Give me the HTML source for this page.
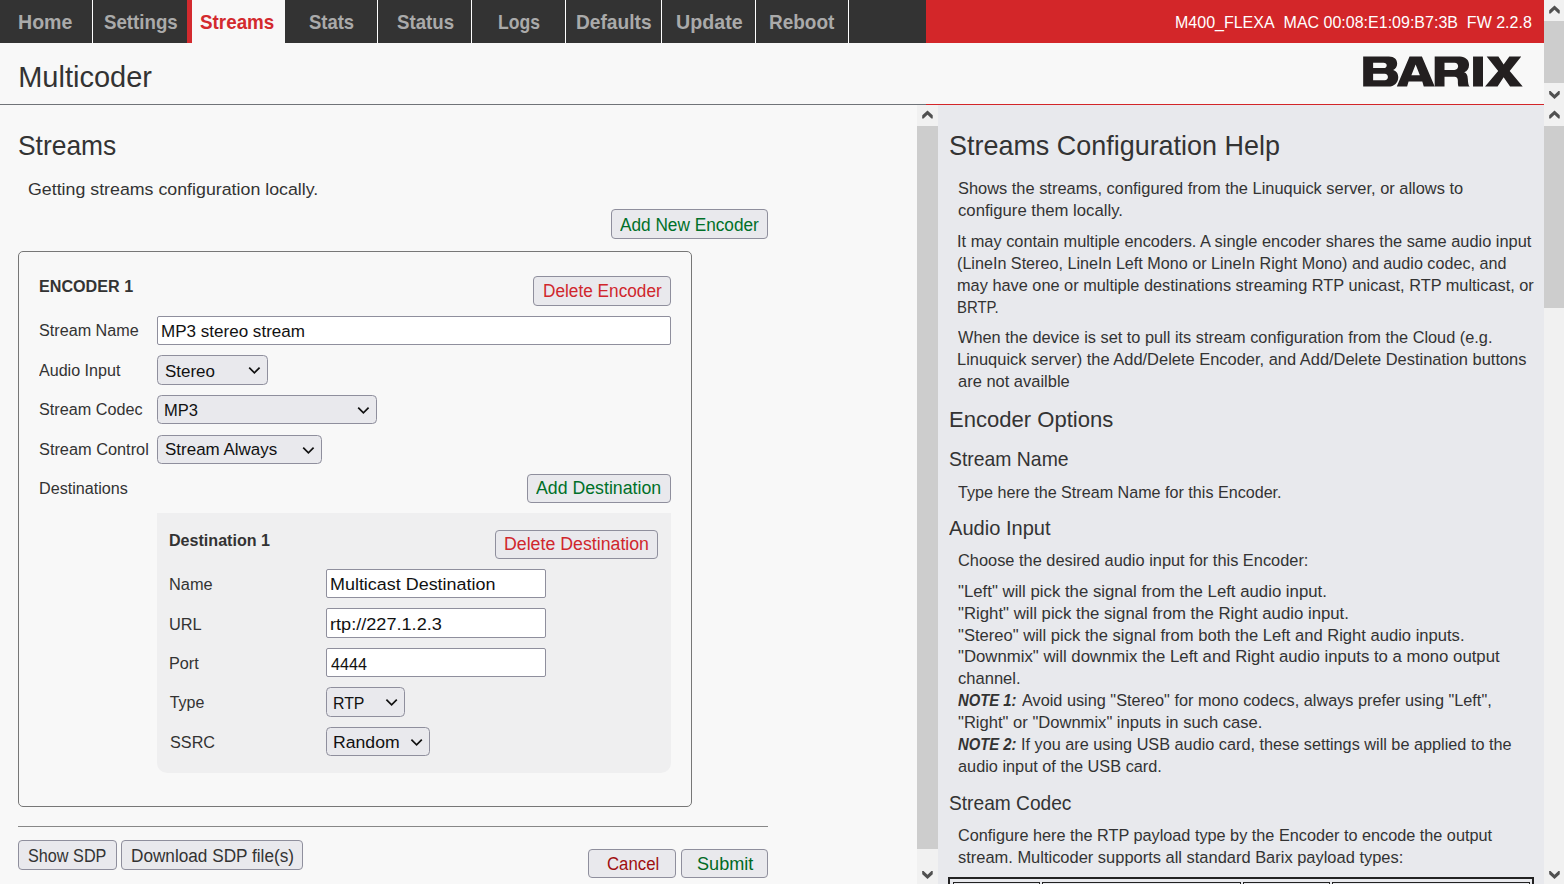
<!DOCTYPE html>
<html><head><meta charset="utf-8">
<style>
html,body{margin:0;padding:0;}
body{width:1564px;height:884px;overflow:hidden;position:relative;background:#f8f8f8;font-family:"Liberation Sans",sans-serif;}
.a{position:absolute;box-sizing:border-box;}
.t{position:absolute;white-space:pre;line-height:1;transform-origin:0 0;font-family:"Liberation Sans",sans-serif;}
.btn{position:absolute;box-sizing:border-box;background:#e9e9ed;border:1px solid #8f8f9d;border-radius:4px;}
.inp{position:absolute;box-sizing:border-box;background:#fff;border:1px solid #8f8f9d;border-radius:2px;}
.sel{position:absolute;box-sizing:border-box;background:#e9e9ed;border:1px solid #8f8f9d;border-radius:4.5px;}
.sep{position:absolute;top:0;width:1px;height:43px;background:#fff;}
.sb{position:absolute;background:#f1f1f1;width:20px;}
.th{position:absolute;left:0;width:20px;background:#cdcdcd;}
.mk{display:inline-block;width:0;height:0;vertical-align:baseline;}
</style></head><body>
<!-- nav -->
<div class="a" style="left:0;top:0;width:926px;height:43px;background:#333;"></div>
<div class="sep" style="left:92px"></div>
<div class="a" style="left:187px;top:0;width:5px;height:43px;background:#d32a2e;"></div>
<div class="a" style="left:192px;top:0;width:93px;height:43px;background:#f8f8f8;"></div>
<div class="sep" style="left:377px"></div>
<div class="sep" style="left:471px"></div>
<div class="sep" style="left:565px"></div>
<div class="sep" style="left:661px"></div>
<div class="sep" style="left:755px"></div>
<div class="sep" style="left:848px"></div>
<div class="a" style="left:926px;top:0;width:618px;height:43px;background:#d32629;"></div>
<!-- header line -->
<div class="a" style="left:0;top:104px;width:926px;height:1px;background:#707378;"></div>
<div class="a" style="left:926px;top:104px;width:618px;height:1px;background:#d32629;"></div>
<!-- logo -->
<svg class="a" style="left:1350px;top:45px;width:190px;height:55px" viewBox="0 0 1564 453">
<g fill="#231f20" fill-rule="evenodd">
<path d="M108,95 H320 C365,95 388,120 388,155 C388,180 375,198 355,205 C380,212 397,235 397,265 C397,310 365,342 315,342 H108 Z M190,147 H275 C292,147 302,156 302,168 C302,180 292,190 275,190 H190 Z M190,237 H285 C302,237 312,250 312,263 C312,278 302,290 285,290 H190 Z"/>
<path d="M385,342 L490,95 H592 L697,342 H607 L595,300 H482 L470,342 Z M505,250 L540,160 L575,250 Z"/>
<path d="M697,95 H905 C950,95 980,125 980,162 C980,195 965,215 940,225 C960,232 968,248 970,280 C972,315 975,332 985,342 H893 C888,330 888,315 888,295 C888,272 878,262 860,262 H778 V342 H697 Z M778,147 H860 C880,147 890,160 890,176 C890,192 880,205 860,205 H778 Z"/>
<path d="M1013,95 H1095 V342 H1013 Z"/>
<path d="M1125,95 H1222 L1265,160 L1312,95 H1410 L1315,215 L1422,342 H1318 L1265,265 L1215,342 H1112 L1220,215 Z"/>
</g></svg>
<!-- help panel bg -->
<div class="a" style="left:938px;top:105px;width:606px;height:779px;background:#e8e9ed;"></div>
<!-- scrollbars -->
<div class="sb" style="left:1544px;top:0;height:105px;">
  <svg class="a" style="left:0;top:0" width="20" height="21"><polygon points="5.12,13.58 6.54,13.58 10.50,9.63 14.46,13.58 15.72,13.58 15.72,10.26 10.50,5.51 5.28,10.26" fill="#505050"/></svg>
  <div class="th" style="top:21px;height:62px;"></div>
  <svg class="a" style="left:0;top:83px" width="20" height="30"><polygon points="5.12,7.92 6.54,7.92 10.50,11.87 14.46,7.92 15.72,7.92 15.72,11.24 10.50,15.99 5.28,11.24" fill="#505050"/></svg>
</div>
<div class="sb" style="left:1544px;top:105px;height:779px;">
  <svg class="a" style="left:0;top:0" width="20" height="21"><polygon points="5.12,13.58 6.54,13.58 10.50,9.63 14.46,13.58 15.72,13.58 15.72,10.26 10.50,5.51 5.28,10.26" fill="#505050"/></svg>
  <div class="th" style="top:21px;height:182px;"></div>
  <svg class="a" style="left:0;top:755px" width="20" height="30"><polygon points="5.12,10.92 6.54,10.92 10.50,14.87 14.46,10.92 15.72,10.92 15.72,14.24 10.50,18.99 5.28,14.24" fill="#505050"/></svg>
</div>
<div class="sb" style="left:917px;top:105px;height:779px;width:21px;">
  <svg class="a" style="left:0;top:0" width="21" height="21"><polygon points="5.12,13.58 6.54,13.58 10.50,9.63 14.46,13.58 15.72,13.58 15.72,10.26 10.50,5.51 5.28,10.26" fill="#505050"/></svg>
  <div class="th" style="top:21px;height:723px;width:21px;"></div>
  <svg class="a" style="left:0;top:755px" width="21" height="30"><polygon points="5.12,10.92 6.54,10.92 10.50,14.87 14.46,10.92 15.72,10.92 15.72,14.24 10.50,18.99 5.28,14.24" fill="#505050"/></svg>
</div>
<!-- left panel content -->
<div class="btn" style="left:611px;top:209px;width:157px;height:30px;"></div>
<div class="a" style="left:18px;top:251px;width:674px;height:556px;border:1px solid #777;border-radius:5px;"></div>
<div class="btn" style="left:533px;top:276px;width:138px;height:30px;"></div>
<div class="inp" style="left:157px;top:316px;width:514px;height:29px;"></div>
<div class="sel" style="left:157px;top:355px;width:111px;height:30px;"></div>
<div class="sel" style="left:157px;top:395px;width:220px;height:29px;"></div>
<div class="sel" style="left:157px;top:435px;width:165px;height:29px;"></div>
<div class="btn" style="left:527px;top:474px;width:144px;height:29px;"></div>
<div class="a" style="left:157px;top:513px;width:514px;height:260px;background:#efeff0;border-radius:0 0 10px 10px;"></div>
<div class="btn" style="left:495px;top:530px;width:163px;height:29px;"></div>
<div class="inp" style="left:326px;top:569px;width:220px;height:29px;"></div>
<div class="inp" style="left:326px;top:608px;width:220px;height:30px;"></div>
<div class="inp" style="left:326px;top:648px;width:220px;height:29px;"></div>
<div class="sel" style="left:326px;top:687px;width:79px;height:30px;"></div>
<div class="sel" style="left:326px;top:727px;width:104px;height:29px;"></div>
<div class="a" style="left:18px;top:826px;width:750px;height:1px;background:#888;"></div>
<div class="btn" style="left:18px;top:840px;width:99px;height:30px;"></div>
<div class="btn" style="left:121px;top:840px;width:182px;height:30px;"></div>
<div class="btn" style="left:588px;top:849px;width:88px;height:29px;"></div>
<div class="btn" style="left:681px;top:849px;width:87px;height:29px;"></div>
<!-- chevrons -->
<svg class="a" style="left:0;top:0;width:938px;height:884px" viewBox="0 0 938 884">
<g fill="none" stroke="#111" stroke-width="1.7">
<polyline points="249.2,367.6 254.4,372.8 259.6,367.6"/>
<polyline points="358.2,407.6 363.4,412.8 368.6,407.6"/>
<polyline points="303.2,447.6 308.4,452.8 313.6,447.6"/>
<polyline points="386.4,699.6 391.6,704.8 396.8,699.6"/>
<polyline points="411.4,739.6 416.6,744.8 421.8,739.6"/>
</g></svg>
<!-- table -->
<div class="a" style="left:948px;top:877px;width:586px;height:20px;border:2px solid #222;"></div>
<div class="a" style="left:953px;top:882px;width:87px;height:20px;border:1px solid #222;"></div>
<div class="a" style="left:1042px;top:882px;width:199px;height:20px;border:1px solid #222;"></div>
<div class="a" style="left:1243px;top:882px;width:87px;height:20px;border:1px solid #222;"></div>
<div class="a" style="left:1332px;top:882px;width:198px;height:20px;border:1px solid #222;"></div>
<span class="t" style="left:18.25px;top:12.01px;font-size:20.6px;font-weight:700;font-style:normal;color:#aaaaaa;transform:scaleX(0.9505);">Home</span>
<span class="t" style="left:103.60px;top:12.01px;font-size:20.6px;font-weight:700;font-style:normal;color:#aaaaaa;transform:scaleX(0.9073);">Settings</span>
<span class="t" style="left:309.20px;top:12.01px;font-size:20.6px;font-weight:700;font-style:normal;color:#aaaaaa;transform:scaleX(0.8957);">Stats</span>
<span class="t" style="left:397.00px;top:12.01px;font-size:20.6px;font-weight:700;font-style:normal;color:#aaaaaa;transform:scaleX(0.9058);">Status</span>
<span class="t" style="left:497.85px;top:12.01px;font-size:20.6px;font-weight:700;font-style:normal;color:#aaaaaa;transform:scaleX(0.8526);">Logs</span>
<span class="t" style="left:575.97px;top:12.01px;font-size:20.6px;font-weight:700;font-style:normal;color:#aaaaaa;transform:scaleX(0.9299);">Defaults</span>
<span class="t" style="left:675.64px;top:12.01px;font-size:20.6px;font-weight:700;font-style:normal;color:#aaaaaa;transform:scaleX(0.9555);">Update</span>
<span class="t" style="left:769.48px;top:12.01px;font-size:20.6px;font-weight:700;font-style:normal;color:#aaaaaa;transform:scaleX(0.9206);">Reboot</span>
<span class="t" style="left:199.50px;top:12.01px;font-size:20.6px;font-weight:700;font-style:normal;color:#d32a2e;transform:scaleX(0.9143);">Streams</span>
<span class="t" style="left:1174.76px;top:14.01px;font-size:17.0px;font-weight:400;font-style:normal;color:#fff;transform:scaleX(0.9416);">M400_FLEXA  MAC 00:08:E1:09:B7:3B  FW 2.2.8</span>
<span class="t" style="left:18.19px;top:63.00px;font-size:29.0px;font-weight:400;font-style:normal;color:#333;">Multicoder</span>
<span class="t" style="left:18.27px;top:131.02px;font-size:28.3px;font-weight:400;font-style:normal;color:#333;transform:scaleX(0.9328);">Streams</span>
<span class="t" style="left:27.90px;top:181.00px;font-size:17.4px;font-weight:400;font-style:normal;color:#333;transform:scaleX(1.0225);">Getting streams configuration locally.</span>
<span class="t" style="left:620.00px;top:216.00px;font-size:18.0px;font-weight:400;font-style:normal;color:#007028;transform:scaleX(0.9567);">Add New Encoder</span>
<span class="t" style="left:38.79px;top:279.01px;font-size:16px;font-weight:700;font-style:normal;color:#333;transform:scaleX(1.0081);">ENCODER 1</span>
<span class="t" style="left:542.74px;top:282.00px;font-size:18.0px;font-weight:400;font-style:normal;color:#d0262c;transform:scaleX(0.9571);">Delete Encoder</span>
<span class="t" style="left:39.10px;top:323.01px;font-size:16px;font-weight:400;font-style:normal;color:#333;transform:scaleX(1.0102);">Stream Name</span>
<span class="t" style="left:39.10px;top:363.00px;font-size:16px;font-weight:400;font-style:normal;color:#333;transform:scaleX(1.0048);">Audio Input</span>
<span class="t" style="left:39.10px;top:402.01px;font-size:16px;font-weight:400;font-style:normal;color:#333;transform:scaleX(1.0130);">Stream Codec</span>
<span class="t" style="left:39.10px;top:442.00px;font-size:16px;font-weight:400;font-style:normal;color:#333;transform:scaleX(1.0202);">Stream Control</span>
<span class="t" style="left:38.89px;top:481.01px;font-size:16px;font-weight:400;font-style:normal;color:#333;transform:scaleX(1.0098);">Destinations</span>
<span class="t" style="left:161.42px;top:323.00px;font-size:17.4px;font-weight:400;font-style:normal;color:#111;transform:scaleX(0.9799);">MP3 stereo stream</span>
<span class="t" style="left:164.50px;top:363.01px;font-size:17.4px;font-weight:400;font-style:normal;color:#111;transform:scaleX(0.9750);">Stereo</span>
<span class="t" style="left:163.55px;top:402.01px;font-size:17.4px;font-weight:400;font-style:normal;color:#111;transform:scaleX(0.9505);">MP3</span>
<span class="t" style="left:164.50px;top:441.01px;font-size:17.4px;font-weight:400;font-style:normal;color:#111;transform:scaleX(0.9761);">Stream Always</span>
<span class="t" style="left:536.40px;top:479.01px;font-size:18.0px;font-weight:400;font-style:normal;color:#007028;transform:scaleX(0.9844);">Add Destination</span>
<span class="t" style="left:169.19px;top:533.01px;font-size:16px;font-weight:700;font-style:normal;color:#333;transform:scaleX(1.0054);">Destination 1</span>
<span class="t" style="left:503.91px;top:535.01px;font-size:18.0px;font-weight:400;font-style:normal;color:#d0262c;transform:scaleX(0.9857);">Delete Destination</span>
<span class="t" style="left:168.68px;top:577.01px;font-size:16px;font-weight:400;font-style:normal;color:#333;transform:scaleX(1.0220);">Name</span>
<span class="t" style="left:168.68px;top:617.00px;font-size:16px;font-weight:400;font-style:normal;color:#333;transform:scaleX(1.0222);">URL</span>
<span class="t" style="left:168.69px;top:656.01px;font-size:16px;font-weight:400;font-style:normal;color:#333;transform:scaleX(1.0139);">Port</span>
<span class="t" style="left:169.70px;top:695.01px;font-size:16px;font-weight:400;font-style:normal;color:#333;">Type</span>
<span class="t" style="left:169.70px;top:735.01px;font-size:16px;font-weight:400;font-style:normal;color:#333;transform:scaleX(1.0137);">SSRC</span>
<span class="t" style="left:330.07px;top:576.01px;font-size:17.4px;font-weight:400;font-style:normal;color:#111;transform:scaleX(1.0310);">Multicast Destination</span>
<span class="t" style="left:330.06px;top:616.01px;font-size:17.4px;font-weight:400;font-style:normal;color:#111;transform:scaleX(1.0422);">rtp://227.1.2.3</span>
<span class="t" style="left:331.10px;top:656.01px;font-size:17.4px;font-weight:400;font-style:normal;color:#111;transform:scaleX(0.9278);">4444</span>
<span class="t" style="left:332.79px;top:695.01px;font-size:17.4px;font-weight:400;font-style:normal;color:#111;transform:scaleX(0.9128);">RTP</span>
<span class="t" style="left:332.69px;top:734.00px;font-size:17.4px;font-weight:400;font-style:normal;color:#111;transform:scaleX(1.0133);">Random</span>
<span class="t" style="left:28.00px;top:847.01px;font-size:18.0px;font-weight:400;font-style:normal;color:#333;transform:scaleX(0.9008);">Show SDP</span>
<span class="t" style="left:130.65px;top:847.01px;font-size:18.0px;font-weight:400;font-style:normal;color:#333;transform:scaleX(0.9546);">Download SDP file(s)</span>
<span class="t" style="left:606.60px;top:855.01px;font-size:18.0px;font-weight:400;font-style:normal;color:#a01010;transform:scaleX(0.9322);">Cancel</span>
<span class="t" style="left:696.60px;top:855.01px;font-size:18.0px;font-weight:400;font-style:normal;color:#006a24;transform:scaleX(1.0050);">Submit</span>
<span class="t" style="left:948.64px;top:132.01px;font-size:28.0px;font-weight:400;font-style:normal;color:#333;transform:scaleX(0.9621);">Streams Configuration Help</span>
<span class="t" style="left:957.90px;top:180.00px;font-size:17.4px;font-weight:400;font-style:normal;color:#333;transform:scaleX(0.9433);">Shows the streams, configured from the Linuquick server, or allows to</span>
<span class="t" style="left:957.90px;top:202.00px;font-size:17.4px;font-weight:400;font-style:normal;color:#333;transform:scaleX(0.9602);">configure them locally.</span>
<span class="t" style="left:956.96px;top:233.00px;font-size:17.4px;font-weight:400;font-style:normal;color:#333;transform:scaleX(0.9416);">It may contain multiple encoders. A single encoder shares the same audio input</span>
<span class="t" style="left:956.97px;top:255.00px;font-size:17.4px;font-weight:400;font-style:normal;color:#333;transform:scaleX(0.9285);">(LineIn Stereo, LineIn Left Mono or LineIn Right Mono) and audio codec, and</span>
<span class="t" style="left:956.96px;top:277.00px;font-size:17.4px;font-weight:400;font-style:normal;color:#333;transform:scaleX(0.9387);">may have one or multiple destinations streaming RTP unicast, RTP multicast, or</span>
<span class="t" style="left:957.04px;top:299.00px;font-size:17.4px;font-weight:400;font-style:normal;color:#333;transform:scaleX(0.8564);">BRTP.</span>
<span class="t" style="left:957.90px;top:329.01px;font-size:17.4px;font-weight:400;font-style:normal;color:#333;transform:scaleX(0.9388);">When the device is set to pull its stream configuration from the Cloud (e.g.</span>
<span class="t" style="left:956.95px;top:351.01px;font-size:17.4px;font-weight:400;font-style:normal;color:#333;transform:scaleX(0.9455);">Linuquick server) the Add/Delete Encoder, and Add/Delete Destination buttons</span>
<span class="t" style="left:957.90px;top:373.01px;font-size:17.4px;font-weight:400;font-style:normal;color:#333;transform:scaleX(0.9473);">are not availble</span>
<span class="t" style="left:957.90px;top:484.00px;font-size:17.4px;font-weight:400;font-style:normal;color:#333;transform:scaleX(0.9273);">Type here the Stream Name for this Encoder.</span>
<span class="t" style="left:957.90px;top:552.01px;font-size:17.4px;font-weight:400;font-style:normal;color:#333;transform:scaleX(0.9414);">Choose the desired audio input for this Encoder:</span>
<span class="t" style="left:957.90px;top:583.00px;font-size:17.4px;font-weight:400;font-style:normal;color:#333;transform:scaleX(0.9642);">&quot;Left&quot; will pick the signal from the Left audio input.</span>
<span class="t" style="left:957.90px;top:605.00px;font-size:17.4px;font-weight:400;font-style:normal;color:#333;transform:scaleX(0.9634);">&quot;Right&quot; will pick the signal from the Right audio input.</span>
<span class="t" style="left:957.90px;top:627.00px;font-size:17.4px;font-weight:400;font-style:normal;color:#333;transform:scaleX(0.9530);">&quot;Stereo&quot; will pick the signal from both the Left and Right audio inputs.</span>
<span class="t" style="left:957.90px;top:648.01px;font-size:17.4px;font-weight:400;font-style:normal;color:#333;transform:scaleX(0.9631);">&quot;Downmix&quot; will downmix the Left and Right audio inputs to a mono output</span>
<span class="t" style="left:957.90px;top:670.01px;font-size:17.4px;font-weight:400;font-style:normal;color:#333;transform:scaleX(0.9520);">channel.</span>
<span class="t" style="left:957.90px;top:714.01px;font-size:17.4px;font-weight:400;font-style:normal;color:#333;transform:scaleX(0.9527);">&quot;Right&quot; or &quot;Downmix&quot; inputs in such case.</span>
<span class="t" style="left:957.90px;top:758.01px;font-size:17.4px;font-weight:400;font-style:normal;color:#333;transform:scaleX(0.9373);">audio input of the USB card.</span>
<span class="t" style="left:957.90px;top:827.00px;font-size:17.4px;font-weight:400;font-style:normal;color:#333;transform:scaleX(0.9341);">Configure here the RTP payload type by the Encoder to encode the output</span>
<span class="t" style="left:957.90px;top:849.00px;font-size:17.4px;font-weight:400;font-style:normal;color:#333;transform:scaleX(0.9459);">stream. Multicoder supports all standard Barix payload types:</span>
<span class="t" style="left:957.90px;top:692.00px;font-size:17.4px;font-weight:700;font-style:italic;color:#333;transform:scaleX(0.8524);">NOTE 1:</span>
<span class="t" style="left:1021.50px;top:692.00px;font-size:17.4px;font-weight:400;font-style:normal;color:#333;transform:scaleX(0.9358);">Avoid using &quot;Stereo&quot; for mono codecs, always prefer using &quot;Left&quot;,</span>
<span class="t" style="left:957.90px;top:736.00px;font-size:17.4px;font-weight:700;font-style:italic;color:#333;transform:scaleX(0.8524);">NOTE 2:</span>
<span class="t" style="left:1020.57px;top:736.00px;font-size:17.4px;font-weight:400;font-style:normal;color:#333;transform:scaleX(0.9345);">If you are using USB audio card, these settings will be applied to the</span>
<span class="t" style="left:948.83px;top:408.00px;font-size:22.8px;font-weight:400;font-style:normal;color:#333;transform:scaleX(0.9673);">Encoder Options</span>
<span class="t" style="left:949.20px;top:449.00px;font-size:20.7px;font-weight:400;font-style:normal;color:#333;transform:scaleX(0.9370);">Stream Name</span>
<span class="t" style="left:949.20px;top:518.01px;font-size:20.7px;font-weight:400;font-style:normal;color:#333;transform:scaleX(0.9702);">Audio Input</span>
<span class="t" style="left:949.20px;top:793.00px;font-size:20.7px;font-weight:400;font-style:normal;color:#333;transform:scaleX(0.9258);">Stream Codec</span>
</body></html>
